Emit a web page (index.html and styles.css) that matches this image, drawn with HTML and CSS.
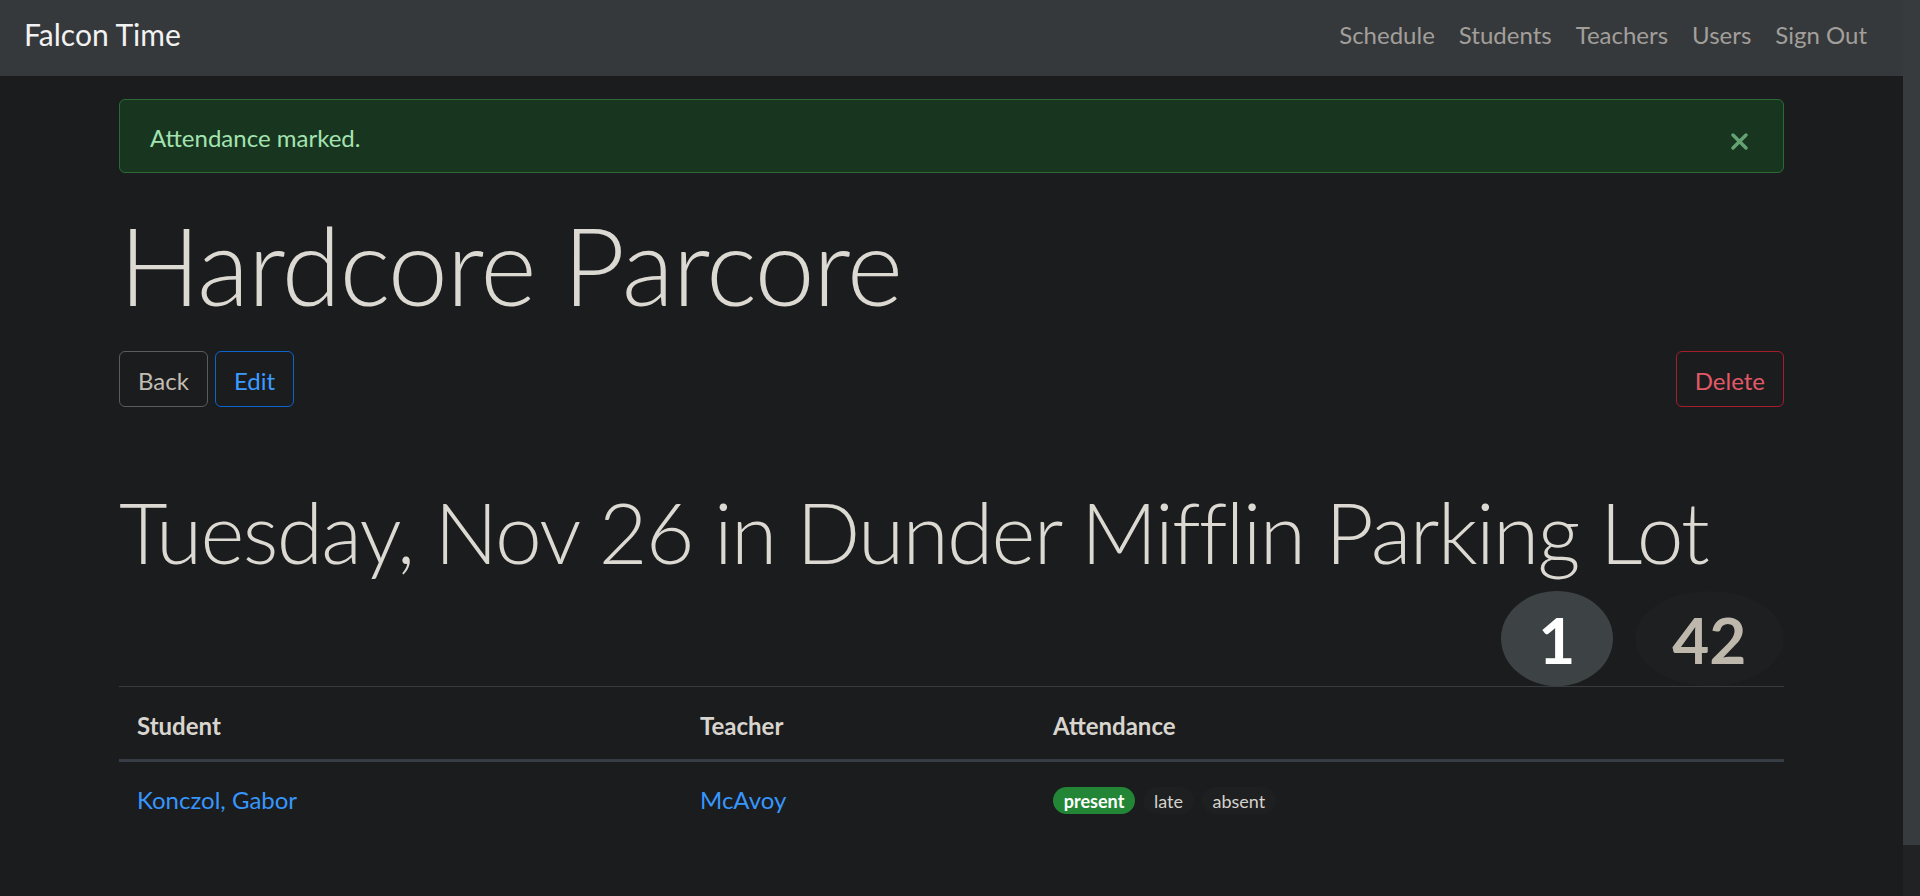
FILE: index.html
```html
<!DOCTYPE html>
<html lang="en">
<head>
<meta charset="utf-8">
<title>Falcon Time</title>
<link rel="stylesheet" href="styles.css">
</head>
<body>
<div class="page">
  <nav class="navbar">
    <a class="brand" href="#">Falcon Time</a>
    <ul class="nav">
      <li><a href="#">Schedule</a></li>
      <li><a href="#">Students</a></li>
      <li><a href="#">Teachers</a></li>
      <li><a href="#">Users</a></li>
      <li><a href="#">Sign Out</a></li>
    </ul>
  </nav>
  <main class="container">
    <div class="alert">
      <span class="alert-text">Attendance marked.</span>
      <button class="close" type="button" aria-label="Close">
        <svg width="17" height="17" viewBox="0 0 17 17"><path d="M2 2 L15 15 M15 2 L2 15" stroke="currentColor" stroke-width="3.4" stroke-linecap="round"/></svg>
      </button>
    </div>
    <h1 class="title">Hardcore Parcore</h1>
    <div class="actions">
      <div class="actions-left">
        <a class="btn btn-secondary" href="#">Back</a>
        <a class="btn btn-primary" href="#">Edit</a>
      </div>
      <a class="btn btn-danger" href="#">Delete</a>
    </div>
    <h2 class="subtitle">Tuesday, Nov 26 in Dunder Mifflin Parking Lot</h2>
    <div class="counts">
      <span class="count count-active">1</span>
      <span class="count count-total">42</span>
    </div>
    <table class="table">
      <colgroup>
        <col class="col-student">
        <col class="col-teacher">
        <col class="col-attendance">
      </colgroup>
      <thead>
        <tr><th>Student</th><th>Teacher</th><th>Attendance</th></tr>
      </thead>
      <tbody>
        <tr>
          <td><a class="link" href="#">Konczol, Gabor</a></td>
          <td><a class="link" href="#">McAvoy</a></td>
          <td>
            <div class="pills">
              <span class="pill pill-present">present</span>
              <span class="pill pill-plain">late</span>
              <span class="pill pill-plain">absent</span>
            </div>
          </td>
        </tr>
      </tbody>
    </table>
  </main>
</div>
<div class="scrollbar"><div class="thumb"></div></div>
</body>
</html>
```

FILE: styles.css
```css
* { box-sizing: border-box; }

html, body {
  margin: 0;
  height: 100%;
}

body {
  display: flex;
  background: #1b1c1e;
  color: #dad6d0;
  font-family: "Lato", "Open Sans", sans-serif;
  font-size: 24px;
  line-height: 36px;
  overflow: hidden;
}

.page {
  flex: 1;
  min-width: 0;
}

.scrollbar {
  width: 17px;
  background: #202224;
  flex-shrink: 0;
}

.thumb {
  height: 845px;
  background: #373b3e;
}

/* Navbar */
.navbar {
  display: flex;
  justify-content: space-between;
  align-items: flex-start;
  height: 76px;
  padding: 12px 24px 0 24px;
  background: #36393c;
}

.brand {
  color: #f2f2f2;
  font-size: 30px;
  line-height: 45px;
  text-decoration: none;
}

.nav {
  display: flex;
  list-style: none;
  margin: 0;
  padding: 5px 0 0 0;
}

.nav a {
  display: block;
  padding: 0 12px;
  color: #a29f9a;
  text-decoration: none;
  font-size: 24px;
  line-height: 36px;
}

/* Container */
.container {
  width: 1665px;
  margin: 0 auto;
  padding-top: 23px;
}

/* Alert */
.alert {
  display: flex;
  justify-content: space-between;
  align-items: center;
  height: 74px;
  padding: 3px 30px 0 30px;
  border: 1px solid #2b6a37;
  border-radius: 6px;
  background: #18361f;
  color: #a3e3b1;
  margin-bottom: 27px;
}

.close {
  display: flex;
  background: none;
  border: 0;
  padding: 0;
  margin: 8px 5px 0 0;
  color: #65a273;
  cursor: pointer;
}

/* Headings */
.title {
  margin: 0 0 21px 0;
  font-size: 108px;
  line-height: 129.6px;
  font-weight: 300;
  letter-spacing: -1.55px;
  color: #dcd8d2;
}

.subtitle {
  margin: 75px 0 9px 0;
  font-size: 84px;
  line-height: 100.8px;
  font-weight: 300;
  letter-spacing: -1.68px;
  color: #dcd8d2;
}

/* Buttons */
.actions {
  display: flex;
  justify-content: space-between;
}

.actions-left {
  display: flex;
  gap: 7px;
}

.btn {
  display: inline-block;
  padding: 11px 18px 7px 18px;
  font-size: 24px;
  line-height: 36px;
  border: 1px solid;
  border-radius: 6px;
  text-decoration: none;
}

.btn-secondary { border-color: #575c60; color: #c2bcb3; }
.btn-primary { border-color: #0d64cb; color: #3a9bff; }
.btn-danger { border-color: #a51e2e; color: #e25867; }

/* Counts */
.counts {
  display: flex;
  justify-content: flex-end;
  gap: 22px;
}

.count {
  display: flex;
  align-items: center;
  justify-content: center;
  height: 95px;
  padding: 3px 37.5px 0 37.5px;
  border-radius: 50%;
  font-size: 64px;
  line-height: 64px;
  font-weight: 700;
}

.count-active { background: #3d4245; color: #ffffff; }
.count-total { background: #1d1f21; color: #bdb7ac; }

/* Table */
.table {
  width: 100%;
  border-collapse: collapse;
  table-layout: fixed;
}

.col-student { width: 563px; }
.col-teacher { width: 353px; }

.table th,
.table td {
  padding: 21px 18px 15px 18px;
  text-align: left;
  vertical-align: top;
  border-top: 1px solid #383c3f;
}

.table th {
  font-weight: 700;
  color: #d8d4ce;
  border-bottom: 3px solid #363d45;
}

.table tbody td {
  border-top: 0;
  padding: 20px 18px 16px 18px;
}

.link {
  color: #3796fc;
  text-decoration: none;
}

.pills {
  display: flex;
  gap: 8px;
  padding-top: 5px;
}

.pill {
  display: inline-block;
  padding: 4.5px 10.8px;
  font-size: 18px;
  line-height: 18px;
  border-radius: 160px;
}

.pill-present {
  background: #228636;
  color: #ffffff;
  font-weight: 700;
}

.pill-plain {
  background: #1d1f21;
  color: #d6d2cc;
}
```
